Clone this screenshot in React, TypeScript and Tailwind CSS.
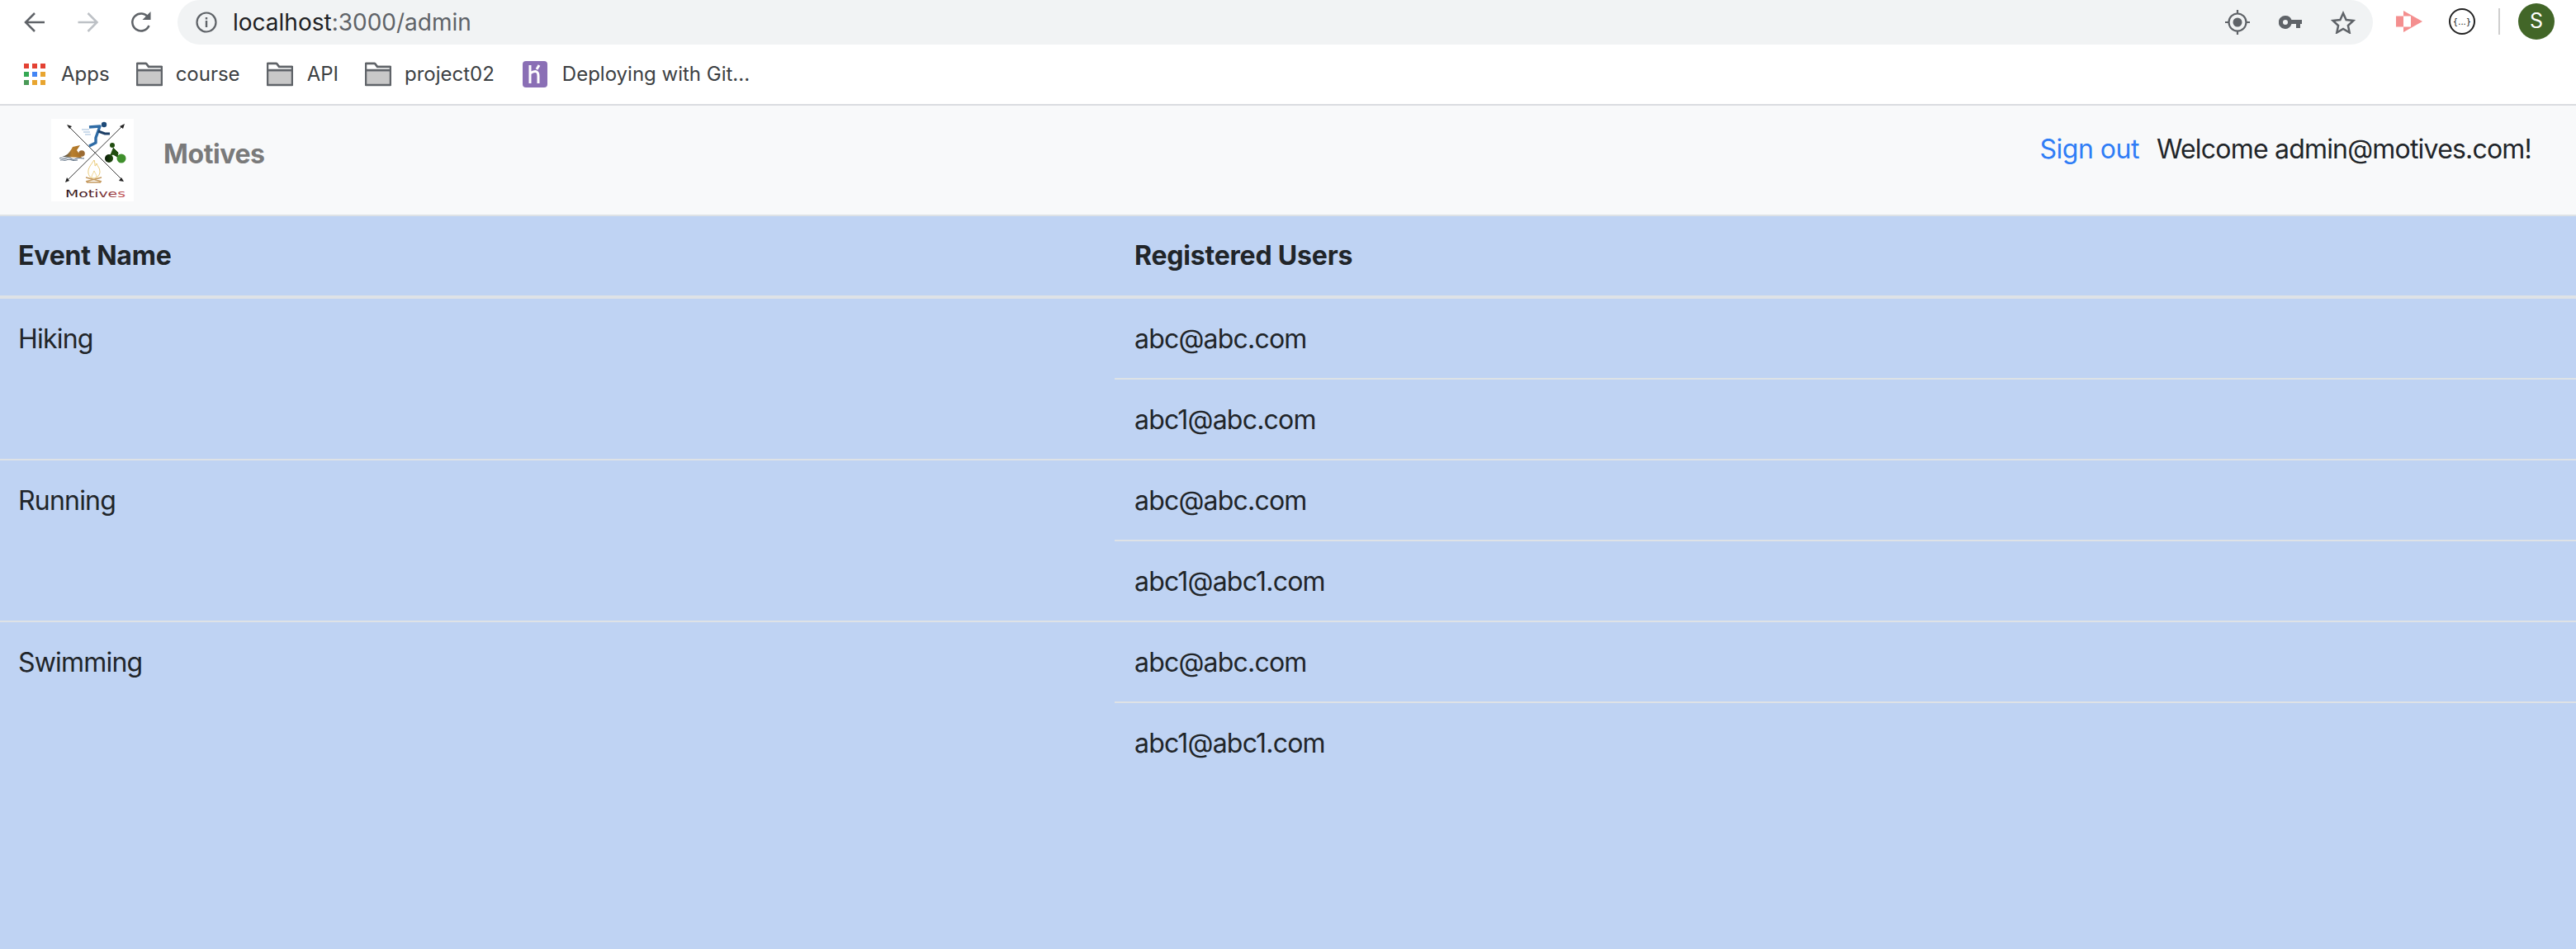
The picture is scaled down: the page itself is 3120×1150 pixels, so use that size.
const events = [
  { name: 'Hiking', users: ['abc@abc.com', 'abc1@abc.com'] },
  { name: 'Running', users: ['abc@abc.com', 'abc1@abc1.com'] },
  { name: 'Swimming', users: ['abc@abc.com', 'abc1@abc1.com'] },
];

const Folder = () => (
  <svg width="32" height="30" viewBox="0 0 32 30" className="shrink-0">
    <path d="M1 28V2h11l3 4h16v22z" fill="#c8c8c8" stroke="#5f6368" strokeWidth="2.5" strokeLinejoin="round" />
    <path d="M1 10h30" stroke="#5f6368" strokeWidth="2.5" />
    <path d="M1 10V2h11l3 4h16v4z" fill="#fff" stroke="#5f6368" strokeWidth="2.5" strokeLinejoin="round" />
  </svg>
);

const Bookmark = ({ icon, label, gap, mr }: { icon: React.ReactNode; label: string; gap: string; mr: string }) => (
  <div className={`flex items-center ${gap} ${mr}`}>
    {icon}
    <span className="text-[24px] text-[#3c4043]">{label}</span>
  </div>
);

const AppsIcon = () => {
  const colors = ['#e34133', '#e34133', '#e34133', '#34a853', '#4285f4', '#e8a530', '#4a9a57', '#e8a530', '#e8a530'];
  return (
    <div className="grid grid-cols-3 gap-[4px] w-[26px] shrink-0">
      {colors.map((c, i) => (
        <svg key={i} width="6" height="6"><rect width="6" height="6" fill={c} /></svg>
      ))}
    </div>
  );
};

const HerokuIcon = () => (
  <svg width="30" height="32" viewBox="0 0 30 32" className="shrink-0">
    <rect width="30" height="32" rx="4" fill="#8a6fb5" />
    <path d="M9 5v22M9 15c3-2 6-3 8-2 2 1 2 3 2 5v9" fill="none" stroke="#fff" strokeWidth="3" />
    <path d="M20 5l-3 5" stroke="#fff" strokeWidth="3" />
  </svg>
);

const Logo = () => (
  <svg width="100" height="100" viewBox="0 0 100 100" className="shrink-0 bg-white">
    <defs>
      <linearGradient id="swim" x1="0" x2="1"><stop offset="0" stopColor="#2a3f55" /><stop offset="0.5" stopColor="#b9802f" /><stop offset="1" stopColor="#a66d20" /></linearGradient>
      <linearGradient id="bike" x1="0" x2="1"><stop offset="0" stopColor="#0a1a05" /><stop offset="1" stopColor="#214d10" /></linearGradient>
      <linearGradient id="word" x1="0" x2="1"><stop offset="0" stopColor="#2a1214" /><stop offset="0.5" stopColor="#5a2226" /><stop offset="1" stopColor="#c9585c" /></linearGradient>
    </defs>
    <path d="M20 8L87 75M88 7L18 76" stroke="#222" strokeWidth="0.9" />
    <path d="M19 7l6 2-3 3zM89 6l-2 6-4-3zM17 77l2-6 3 4zM88 76l-6-1 3-4z" fill="#222" />
    {/* runner */}
    <circle cx="64" cy="7" r="3.200" fill="#1d4a78" />
    <path d="M46 10L59 9L54 23L54 29L46 33" fill="none" stroke="#2f6ca6" strokeWidth="3.400" strokeLinejoin="round" />
    <path d="M57 15L65 18L71 18" fill="none" stroke="#1d3f66" strokeWidth="3" />
    <path d="M37 13h9M39 16h8M41 19h7" stroke="#8fb1d2" strokeWidth="0.9" />
    {/* swimmer */}
    <circle cx="37" cy="42" r="3.800" fill="#9a6a32" />
    <path d="M13 46C18 45 22 42 26 34L35 32L31 38L37 47Z" fill="url(#swim)" />
    <path d="M10 48c3-2 4 1 7 0s4-2 7 0 4 1 7 0 5 0 9 0M11 50c3-1 4 1 7 0s4-1 7 0 4 0 7 0" fill="none" stroke="#3a4f66" strokeWidth="0.9" />
    {/* cyclist */}
    <circle cx="70" cy="48" r="5" fill="url(#bike)" />
    <circle cx="85" cy="48" r="5.500" fill="#3f8f2c" />
    <circle cx="74" cy="32" r="3" fill="#214d10" />
    <path d="M75 35l6 6-1 5-5-3-4 2" fill="#214d10" stroke="#214d10" strokeWidth="1" />
    {/* campfire */}
    <path d="M52 50c-4 6-8 10-7 16 1 4 3 6 6 6 4 0 8-3 8-8 0-5-3-6-4-10-1 2-1 3-2 3 0-2 0-4-1-7z" fill="none" stroke="#e5bd55" strokeWidth="0.8" />
    <path d="M49 71c0-3 2-5 3-8 1 3 3 4 3 8" fill="none" stroke="#e5bd55" strokeWidth="0.6" />
    <path d="M42 71l19 5M42 76l19-5M43 77h17" stroke="#c59a60" strokeWidth="1.500" />
    <text x="17" y="95" fontFamily="'DejaVu Sans', sans-serif" fontSize="12" textLength="73" lengthAdjust="spacingAndGlyphs" fill="url(#word)">Motives</text>
  </svg>
);

const ChromeIcons = {
  target: (
    <svg width="30" height="30" viewBox="0 0 30 30">
      <circle cx="15" cy="15" r="10.500" fill="none" stroke="#5f6368" strokeWidth="2.200" />
      <circle cx="15" cy="15" r="5.500" fill="#5f6368" />
      <path d="M15 0v5M15 25v5M0 15h5M25 15h5" stroke="#5f6368" strokeWidth="2.200" />
    </svg>
  ),
  key: (
    <svg width="28" height="16" viewBox="0 0 28 16">
      <path fillRule="evenodd" d="M8 0a8 8 0 0 1 7.500 5H28v5h-2v5h-5v-5h-5.500A8 8 0 1 1 8 0zm0 5a3 3 0 1 0 0 6 3 3 0 0 0 0-6z" fill="#5f6368" />
    </svg>
  ),
  star: (
    <svg width="30" height="28" viewBox="0 0 30 28">
      <path d="M15 3l3.600 8 8.800 1-6.500 6 1.800 8.500L15 22l-7.700 4.500L9.100 18l-6.500-6 8.800-1z" fill="none" stroke="#5f6368" strokeWidth="2.500" />
    </svg>
  ),
};

export default function App() {
  return (
    <div className="min-h-[1150px] bg-[#bfd3f3] text-[#212529] font-['Inter','Liberation_Sans',sans-serif]">
      {/* browser chrome */}
      <div className="bg-white">
        <div className="flex items-start h-[55px] pl-[29px]">
          <svg width="26" height="26" viewBox="0 0 26 26" className="mt-[14px] shrink-0">
            <path d="M25 13H3M13 2L2 13l11 11" fill="none" stroke="#5f6368" strokeWidth="2.500" />
          </svg>
          <svg width="27" height="26" viewBox="0 0 26 26" className="mt-[14px] ml-[38px] shrink-0">
            <path d="M1 13h22M13 2l11 11-11 11" fill="none" stroke="#bdc1c6" strokeWidth="2.500" />
          </svg>
          <svg width="27" height="26" viewBox="0 0 26 26" className="mt-[14px] ml-[38px] shrink-0">
            <path d="M22 17a10.500 10.500 0 1 1-1-10" fill="none" stroke="#5f6368" strokeWidth="2.500" />
            <path d="M24 0v10H14z" fill="#5f6368" />
          </svg>
          <div className="ml-[30px] w-[2659px] h-[54px] bg-[#f1f3f4] rounded-[27px] flex items-center pl-[22px] pr-[21px]">
            <svg width="26" height="26" viewBox="0 0 26 26" className="shrink-0">
              <circle cx="13" cy="13" r="11.500" fill="none" stroke="#5f6368" strokeWidth="2.200" />
              <path d="M13 11v8M13 7v2.500" stroke="#5f6368" strokeWidth="2.400" />
            </svg>
            <span className="ml-[19px] text-[28px] text-[#202124]">
              localhost<span className="text-[#5f6368]">:3000/admin</span>
            </span>
            <div className="ml-auto flex items-center gap-[35px]">
              {ChromeIcons.target}
              {ChromeIcons.key}
              {ChromeIcons.star}
            </div>
          </div>
          <svg width="32" height="26" viewBox="0 0 32 26" className="ml-[28px] mt-[13px] shrink-0">
            <rect y="6.500" width="9" height="13" fill="#f48f8f" />
            <path d="M9 0L32 13L9 26V19.500H18V6.500H9z" fill="#f48f8f" />
            <path d="M18 9L22 13L18 17z" fill="#f48f8f" />
          </svg>
          <div className="ml-[32px] mt-[10px] w-[32px] h-[32px] rounded-full border-2 border-[#222] flex items-center justify-center text-[10px] font-['DejaVu_Sans',sans-serif] text-[#111] shrink-0">
            {'{...}'}
          </div>
          <div className="ml-[28px] mt-[10px] w-[2px] h-[32px] bg-[#cfcfcf] shrink-0" />
          <div className="ml-[22px] mt-[4px] w-[44px] h-[44px] rounded-full bg-[#426628] text-white flex items-center justify-center text-[25px] shrink-0">
            S
          </div>
        </div>
        <div className="flex items-center h-[73px] pl-[29px] pb-[1px] border-b-2 border-[#dadce0]">
          <Bookmark icon={<AppsIcon />} label="Apps" gap="gap-[19px]" mr="mr-[32px]" />
          <Bookmark icon={<Folder />} label="course" gap="gap-[16px]" mr="mr-[32px]" />
          <Bookmark icon={<Folder />} label="API" gap="gap-[17px]" mr="mr-[32px]" />
          <Bookmark icon={<Folder />} label="project02" gap="gap-[16px]" mr="mr-[34px]" />
          <Bookmark icon={<HerokuIcon />} label="Deploying with Git..." gap="gap-[18px]" mr="mr-0" />
        </div>
      </div>

      {/* navbar */}
      <nav className="flex items-center h-[134px] bg-[#f8f9fa] border-b-2 border-[#dee2e6] pl-[62px] pr-[54px]">
        <Logo />
        <span className="ml-[36px] mb-[14px] text-[32px] font-bold tracking-[-0.4px] text-[#7a7a7a]">Motives</span>
        <div className="ml-auto mb-[26px] flex items-center gap-[21px] text-[32px]">
          <a className="text-[#2f7df6] tracking-[-0.5px]">Sign out</a>
          <span className="tracking-[-0.8px]">Welcome admin@motives.com!</span>
        </div>
      </nav>

      {/* table */}
      <div className="flex h-[96px] items-center text-[32px] font-bold tracking-[-0.2px] border-b-4 border-[#dee2e6] box-content">
        <div className="w-[1350px] pl-[22px]">Event Name</div>
        <div className="pl-[24px]">Registered Users</div>
      </div>
      {events.map((ev, i) => (
        <div key={ev.name} className={`flex text-[32px] tracking-[-0.8px] ${i > 0 ? 'border-t-2 border-[#dee2e6]' : ''}`}>
          <div className="w-[1350px] pl-[22px] pt-[1px] h-[96px] flex items-center">{ev.name}</div>
          <div className="flex-1">
            {ev.users.map((u, j) => (
              <div key={j} className={`pl-[24px] pt-[1px] flex items-center ${j > 0 ? 'h-[98px] border-t-2 border-[#dee2e6]' : 'h-[96px]'}`}>
                {u}
              </div>
            ))}
          </div>
        </div>
      ))}
    </div>
  );
}
